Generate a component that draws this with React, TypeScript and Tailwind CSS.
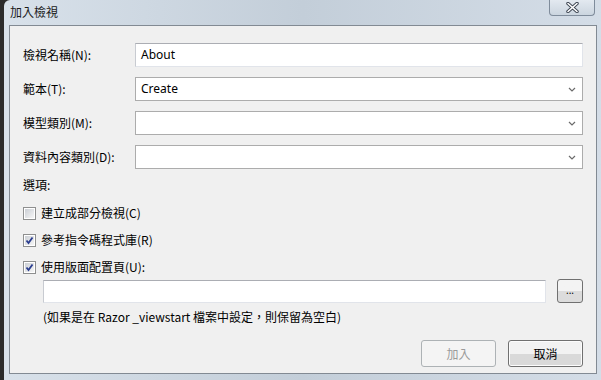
const cjk = "font-['Noto_Sans_CJK_TC','Noto_Sans',sans-serif]";
const latin = "font-['Noto_Sans','Liberation_Sans','Noto_Sans_CJK_TC',sans-serif]";

function Chevron() {
  return (
    <svg width="8" height="5" viewBox="0 0 8 5" className="shrink-0">
      <path d="M1 1l3 3 3-3" fill="none" stroke="#6b6b6b" strokeWidth="1.2" />
    </svg>
  );
}

function Combo({ value }: { value?: string }) {
  return (
    <div className="h-[24px] w-[448px] bg-white border border-[#acacac] flex items-center justify-between pl-[5px] pr-[6px]">
      <span className={`${latin} text-[12px] text-black`}>{value}</span>
      <Chevron />
    </div>
  );
}

function CheckBox({ checked }: { checked?: boolean }) {
  return (
    <div className="w-[13px] h-[13px] border border-[#8e8f8f] bg-white p-[1px] shrink-0">
      <div className="w-full h-full bg-linear-to-br from-[#cbcfd5] to-[#f6f6f6] flex items-center justify-center">
        {checked && (
          <svg width="9" height="9" viewBox="0 0 9 9">
            <path d="M1.5 4.5l2 2.5L7.5 1.5" fill="none" stroke="#2a3d8f" strokeWidth="1.8" />
          </svg>
        )}
      </div>
    </div>
  );
}

function Option({ label, checked }: { label: string; checked?: boolean }) {
  return (
    <div className="flex items-center gap-[5px] h-[16px]">
      <CheckBox checked={checked} />
      <span className={`${cjk} text-[12px] text-black leading-none`}>{label}</span>
    </div>
  );
}

export default function App() {
  return (
    <div className="w-[601px] h-[380px] flex bg-[#2b2b2b] overflow-hidden">
      <div className="w-[4px] shrink-0" />
      <div className="flex-1 flex flex-col bg-linear-to-r from-[#d8e1ea] via-[#c3ced9] to-[#d4dde7] rounded-tl-[6px] pr-[4px] pb-[6px] pl-[5px]">
        {/* Title bar */}
        <div className="h-[25px] flex items-start justify-between shrink-0">
          <span className={`${cjk} text-[12px] text-[#1b1b1b] pt-[6px] pl-[1px] leading-none`}>加入檢視</span>
          <div className="w-[46px] h-[16px] mr-[2px] border border-t-0 border-[#7f8c9b] rounded-b-[4px] bg-linear-to-b from-[#e3e9f0] to-[#cbd5df] flex items-center justify-center">
            <svg width="13" height="11" viewBox="0 0 13 11">
              <path d="M2 1.5l9 8M11 1.5l-9 8" stroke="#3b4350" strokeWidth="3.4" strokeLinecap="round" />
              <path d="M2 1.5l9 8M11 1.5l-9 8" stroke="#ffffff" strokeWidth="1.6" strokeLinecap="round" />
            </svg>
          </div>
        </div>

        {/* Client area */}
        <div className="flex-1 border border-[#828a93] bg-[#f0f0f0] flex flex-col pl-[13px] pr-[13px] pt-[17px]">
          <div className="grid grid-cols-[112px_448px] gap-y-[10px] items-center">
            <span className={`${cjk} text-[12px] text-black`}>檢視名稱(N):</span>
            <div className="h-[24px] bg-white border border-[#e1e4ea] border-t-[#abadb3] border-l-[#c8cbd1] flex items-center pl-[5px]">
              <span className={`${latin} text-[12px] text-black`}>About</span>
            </div>
            <span className={`${cjk} text-[12px] text-black`}>範本(T):</span>
            <Combo value="Create" />
            <span className={`${cjk} text-[12px] text-black`}>模型類別(M):</span>
            <Combo />
            <span className={`${cjk} text-[12px] text-black`}>資料內容類別(D):</span>
            <Combo />
          </div>

          <div className={`${cjk} text-[12px] text-black mt-[8px] leading-[16px]`}>選項:</div>

          <div className="flex flex-col gap-[11px] mt-[12px]">
            <Option label="建立成部分檢視(C)" />
            <Option label="參考指令碼程式庫(R)" checked />
            <Option label="使用版面配置頁(U):" checked />
          </div>

          <div className="flex items-center pl-[20px] mt-[4px] gap-[11px]">
            <div className="w-[503px] h-[23px] bg-white border border-[#e1e4ea] border-t-[#abadb3] border-l-[#c8cbd1]" />
            <div className="w-[26px] h-[24px] rounded-[3px] border border-[#707070] bg-linear-to-b from-[#f3f3f3] from-50% to-[#dcdcdc] to-50% flex items-center justify-center">
              <span className={`${latin} text-[10px] text-black leading-none pb-[2px]`}>...</span>
            </div>
          </div>

          <div className={`${cjk} text-[12px] text-black pl-[20px] mt-[6px] leading-[16px]`}>
            (如果是在 Razor _viewstart 檔案中設定，則保留為空白)
          </div>

          <div className="flex justify-end gap-[12px] mt-[15px]">
            <div className="w-[75px] h-[27px] rounded-[3px] border border-[#adb2b5] bg-[#f4f4f4] flex items-center justify-center">
              <span className={`${cjk} text-[12px] text-[#9a9a9a]`}>加入</span>
            </div>
            <div className="w-[75px] h-[27px] rounded-[3px] border border-[#707070] bg-linear-to-b from-[#f2f2f2] from-50% to-[#d9d9d9] to-50% flex items-center justify-center shadow-[inset_0_0_0_1px_#fcfcfc]">
              <span className={`${cjk} text-[12px] text-black`}>取消</span>
            </div>
          </div>
        </div>
      </div>
    </div>
  );
}
